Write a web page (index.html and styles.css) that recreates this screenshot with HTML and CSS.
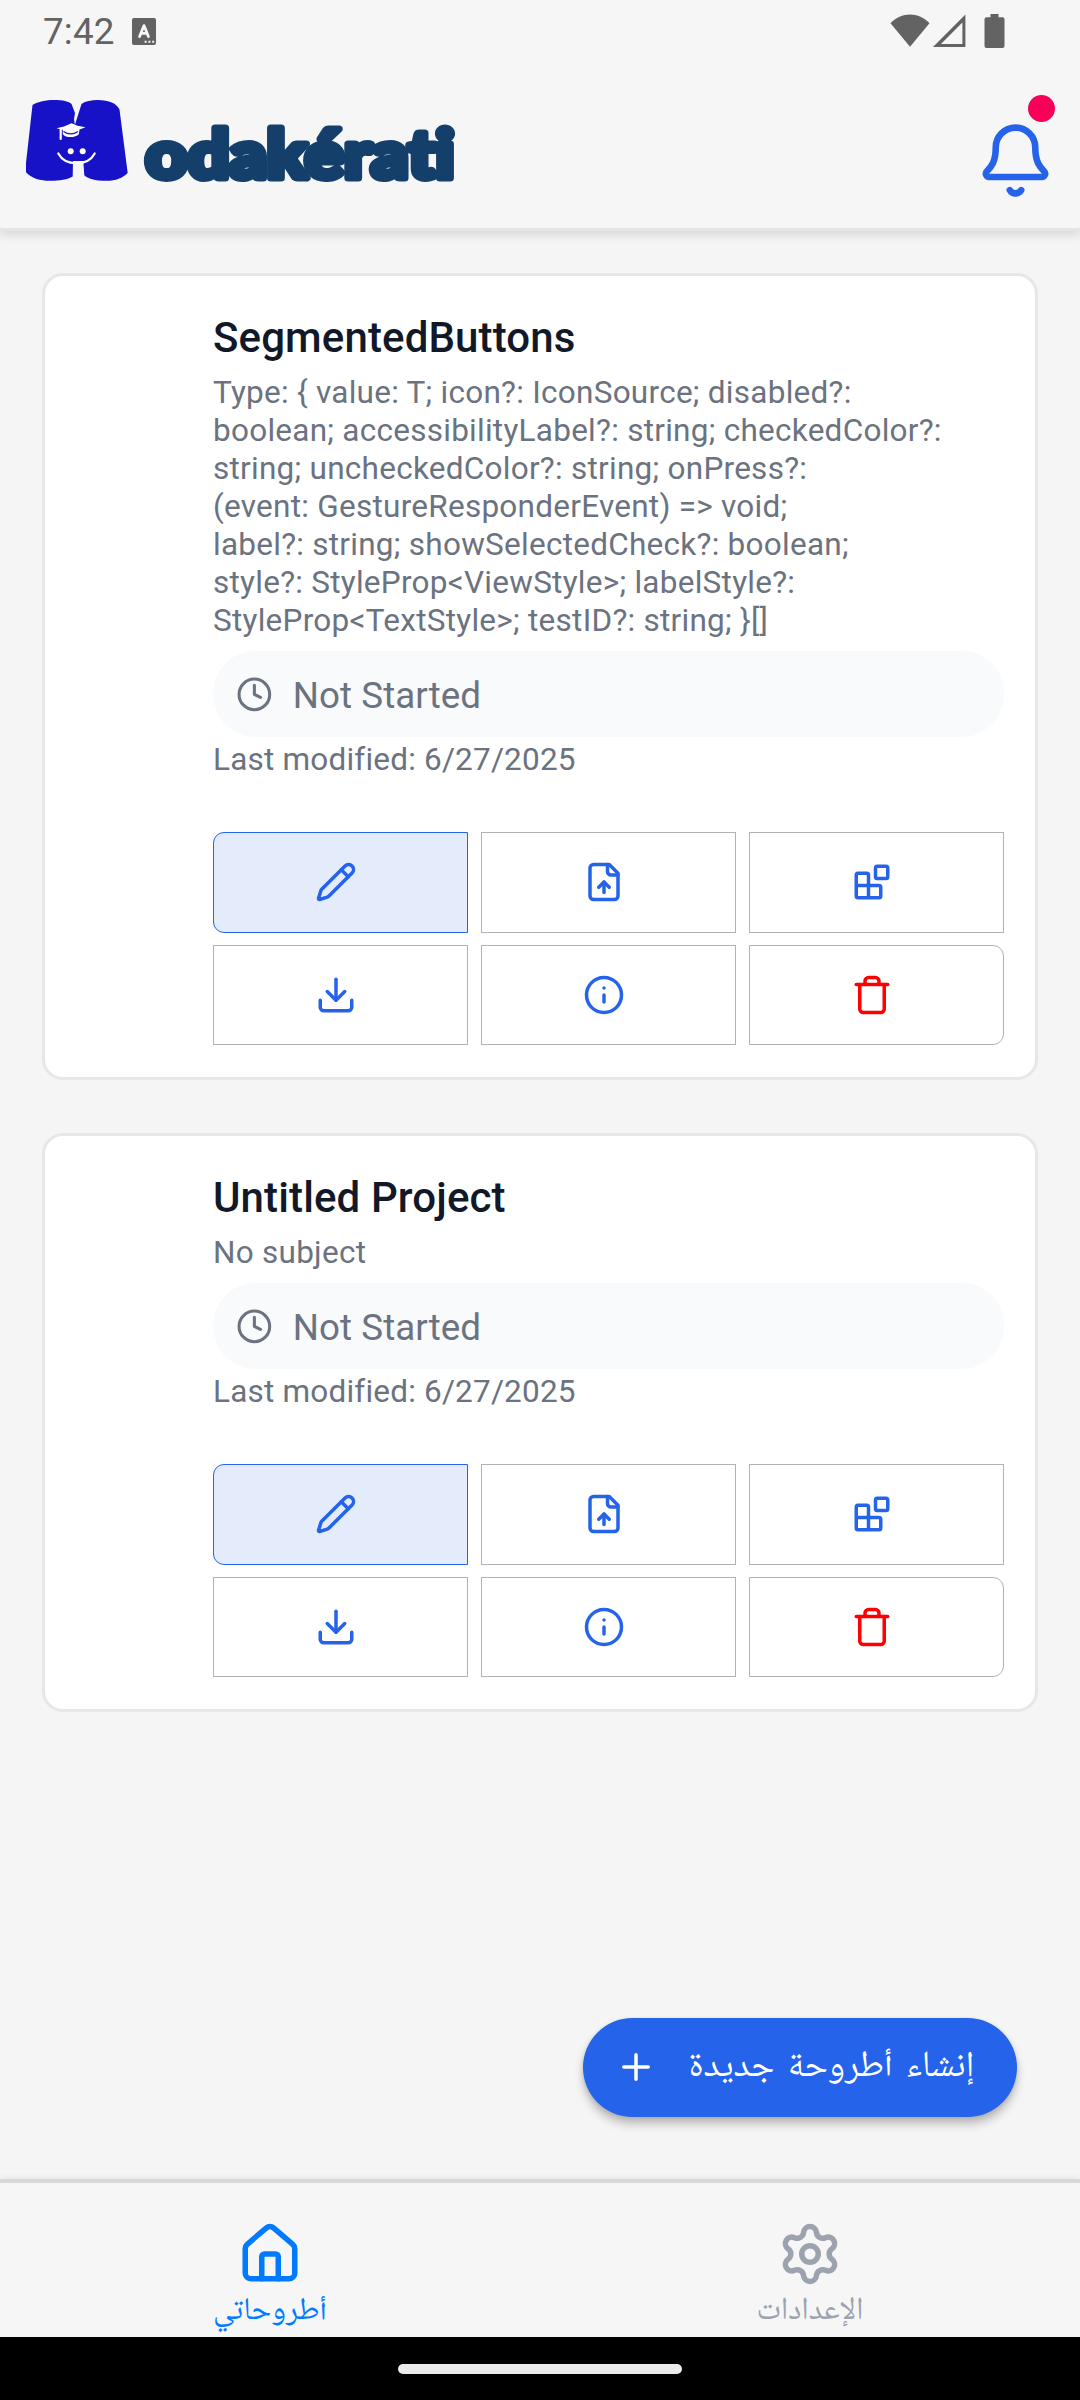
FILE: index.html
```html
<!DOCTYPE html>
<html lang="en">
<head>
<meta charset="utf-8">
<title>Modakérati</title>
<link rel="stylesheet" href="styles.css">
</head>
<body>
<svg class="defs" aria-hidden="true">
  <symbol id="clock" viewBox="0 0 24 24"><circle cx="12" cy="12" r="10"/><path d="M12 6v6l4 2"/></symbol>
  <symbol id="pencil" viewBox="0 0 24 24"><path d="M21.174 6.812a1 1 0 0 0-3.986-3.987L3.842 16.174a2 2 0 0 0-.5.83l-1.321 4.352a.5.5 0 0 0 .623.622l4.353-1.32a2 2 0 0 0 .83-.497z"/><path d="m15 5 4 4"/></symbol>
  <symbol id="file-up" viewBox="0 0 24 24"><path d="M15 2H6a2 2 0 0 0-2 2v16a2 2 0 0 0 2 2h12a2 2 0 0 0 2-2V7Z"/><path d="M14 2v4a2 2 0 0 0 2 2h4"/><path d="M12 12v6"/><path d="m15 15-3-3-3 3"/></symbol>
  <symbol id="blocks" viewBox="0 0 24 24"><rect width="7" height="7" x="14" y="3" rx="1"/><path d="M10 21V8a1 1 0 0 0-1-1H4a1 1 0 0 0-1 1v12a1 1 0 0 0 1 1h12a1 1 0 0 0 1-1v-5a1 1 0 0 0-1-1H3"/></symbol>
  <symbol id="download" viewBox="0 0 24 24"><path d="M21 15v4a2 2 0 0 1-2 2H5a2 2 0 0 1-2-2v-4"/><path d="m7 10 5 5 5-5"/><path d="M12 15V3"/></symbol>
  <symbol id="info" viewBox="0 0 24 24"><circle cx="12" cy="12" r="10"/><path d="M12 16v-4"/><path d="M12 8h.01"/></symbol>
  <symbol id="trash" viewBox="0 0 24 24"><path d="M3 6h18"/><path d="M19 6v14c0 1-1 2-2 2H7c-1 0-2-1-2-2V6"/><path d="M8 6V4c0-1 1-2 2-2h4c1 0 2 1 2 2v2"/></symbol>
</svg>

<div class="statusbar">
  <span class="time">7:42</span>
  <svg class="keyboard-icon" viewBox="0 0 24 27"><rect width="24" height="27" rx="2" fill="#636363"/><path d="M7.6 18.6 12 7.6l4.4 11M9.4 15.4h5.2" fill="none" stroke="#f6f6f6" stroke-width="2.8" stroke-linecap="round" stroke-linejoin="round"/><path d="M12.6 22.8h2v2h-2zM16.4 22.8h2v2h-2zM20.2 22.8h2v2h-2z" fill="#f6f6f6"/></svg>
  <svg class="system-icons" viewBox="0 0 115 35"><g fill="#636363"><path d="M.5 9.2C11-2.4 29-2.4 39.5 9.2L20 32.8z"/><path fill-rule="evenodd" d="M75.4 .6V33H43zM72.4 8.6 51 30h21.400z"/><path d="M100.500 0h8v3.200h4a2 2 0 0 1 2 2V32a2 2 0 0 1-2 2h-16a2 2 0 0 1-2-2V5.200a2 2 0 0 1 2-2h4z"/></g></svg>
</div>

<header class="header">
  <svg class="logo" viewBox="26 97 440 90">
    <path class="mark" d="M32.500 105C38 101.500 46 100 54 100c9 0 15 1.500 17.500 4L75 113l-1 6 .7 5h.5L81.500 104c4-3 10-4 16-4 12 0 19 3.500 22 9.500L127.700 173c-5 5-12 7.800-21 7.800-12 0-19-2-22.400-5.500L83.300 161H73l-.3 15.500c-5 3-13 4.300-22.700 4.300-10 0-18-2-24-8.500V163z"/>
    <g class="mark-face">
      <path d="M56.500 128.300 64 126.500l7.500-3.200 6 2.500 8 1.500-6 2.300-.7 4.700c-3 3.500-13 4-16 0v-4.500z"/>
      <circle cx="70.700" cy="151.300" r="3"/><circle cx="82.700" cy="151.300" r="3"/>
      <path class="line" d="M60.700 129v10M58.300 153.500c7 13 29.500 13 36.400 0"/>
    </g>
    <path class="cap-band" d="M63.500 131.500c4.500 3 10 3 14.500 0"/>
    <text class="wordmark" x="145.500" y="178" textLength="309" lengthAdjust="spacingAndGlyphs">odakérati</text>
  </svg>
  <div class="bell">
    <svg viewBox="0 0 24 24"><path d="M10.268 21a2 2 0 0 0 3.464 0"/><path d="M3.262 15.326A1 1 0 0 0 4 17h16a1 1 0 0 0 .74-1.673C19.41 13.956 18 12.499 18 8A6 6 0 0 0 6 8c0 4.499-1.411 5.956-2.738 7.326"/></svg>
    <span class="badge"></span>
  </div>
</header>

<main class="main">
  <article class="card">
    <h2 class="title">SegmentedButtons</h2>
    <p class="desc">Type: { value: T; icon?: IconSource; disabled?:<br>boolean; accessibilityLabel?: string; checkedColor?:<br>string; uncheckedColor?: string; onPress?:<br>(event: GestureResponderEvent) =&gt; void;<br>label?: string; showSelectedCheck?: boolean;<br>style?: StyleProp&lt;ViewStyle&gt;; labelStyle?:<br>StyleProp&lt;TextStyle&gt;; testID?: string; }[]</p>
    <div class="chip"><svg><use href="#clock"/></svg><span>Not Started</span></div>
    <p class="modified">Last modified: 6/27/2025</p>
    <div class="actions">
      <button class="action selected"><svg><use href="#pencil"/></svg></button>
      <button class="action"><svg><use href="#file-up"/></svg></button>
      <button class="action"><svg><use href="#blocks"/></svg></button>
      <button class="action"><svg><use href="#download"/></svg></button>
      <button class="action"><svg><use href="#info"/></svg></button>
      <button class="action danger"><svg><use href="#trash"/></svg></button>
    </div>
  </article>

  <article class="card">
    <h2 class="title">Untitled Project</h2>
    <p class="desc">No subject</p>
    <div class="chip"><svg><use href="#clock"/></svg><span>Not Started</span></div>
    <p class="modified">Last modified: 6/27/2025</p>
    <div class="actions">
      <button class="action selected"><svg><use href="#pencil"/></svg></button>
      <button class="action"><svg><use href="#file-up"/></svg></button>
      <button class="action"><svg><use href="#blocks"/></svg></button>
      <button class="action"><svg><use href="#download"/></svg></button>
      <button class="action"><svg><use href="#info"/></svg></button>
      <button class="action danger"><svg><use href="#trash"/></svg></button>
    </div>
  </article>

  <button class="fab"><svg viewBox="0 0 24 24"><path d="M5 12h14M12 5v14"/></svg><span dir="rtl" lang="ar">إنشاء أطروحة جديدة</span></button>
</main>

<nav class="tabs">
  <a class="tab active"><svg viewBox="0 0 24 24"><path d="M15 21v-8a1 1 0 0 0-1-1h-4a1 1 0 0 0-1 1v8"/><path d="M3 10a2 2 0 0 1 .709-1.528l7-5.999a2 2 0 0 1 2.582 0l7 5.999A2 2 0 0 1 21 10v9a2 2 0 0 1-2 2H5a2 2 0 0 1-2-2z"/></svg><span dir="rtl" lang="ar">أطروحاتي</span></a>
  <a class="tab"><svg viewBox="0 0 24 24"><path d="M9.671 4.136a2.34 2.34 0 0 1 4.659 0 2.34 2.34 0 0 0 3.319 1.915 2.34 2.34 0 0 1 2.33 4.033 2.34 2.34 0 0 0 0 3.831 2.34 2.34 0 0 1-2.33 4.033 2.34 2.34 0 0 0-3.319 1.915 2.34 2.34 0 0 1-4.659 0 2.34 2.34 0 0 0-3.32-1.915 2.34 2.34 0 0 1-2.33-4.033 2.34 2.34 0 0 0 0-3.831A2.34 2.34 0 0 1 6.35 6.051a2.34 2.34 0 0 0 3.319-1.915"/><circle cx="12" cy="12" r="3"/></svg><span dir="rtl" lang="ar">الإعدادات</span></a>
</nav>
<div class="gesture"><span></span></div>
</body>
</html>
```
FILE: styles.css
```css
* { box-sizing: border-box; margin: 0; padding: 0; }

body {
  width: 1080px;
  height: 2400px;
  display: flex;
  flex-direction: column;
  overflow: hidden;
  background: #f5f5f5;
  font-family: Roboto, sans-serif;
}

svg { display: block; flex: none; }
.defs { display: none; }

.statusbar {
  height: 63px;
  display: flex;
  align-items: center;
  padding: 0 75px 0 43px;
  background: #f6f6f6;
  z-index: 2;
}
.time { font-size: 36.75px; letter-spacing: .2px; color: #636363; width: 89px; }
.keyboard-icon { width: 24px; height: 27px; }
.system-icons { width: 115px; height: 35px; margin-left: auto; }

.header {
  height: 168px;
  display: flex;
  justify-content: space-between;
  padding: 34px 25px 0 26px;
  background: #f6f6f6;
  border-bottom: 3px solid #e3e3e8;
  box-shadow: 0 4px 10px rgba(0, 0, 0, .12);
  z-index: 1;
}
.logo { width: 440px; height: 90px; overflow: visible; }
.mark { fill: #1712c8; }
.mark-face { fill: #fff; }
.mark-face .line { fill: none; stroke: #fff; stroke-width: 2.2; stroke-linecap: round; }
.cap-band { fill: none; stroke: #1712c8; stroke-width: 1.2; }
.wordmark {
  font: 900 66px Lato, sans-serif;
  font-variant-ligatures: none;
  fill: #153f6b; stroke: #153f6b; stroke-width: 7; stroke-linejoin: round;
}
.bell { position: relative; width: 79px; height: 79px; margin-top: 24px; }
.bell svg {
  width: 79px; height: 79px;
  fill: none; stroke: #2563eb; stroke-width: 2;
  stroke-linecap: round; stroke-linejoin: round;
}
.badge {
  position: absolute; top: -26px; right: 0;
  width: 27px; height: 27px; border-radius: 50%;
  background: #f8005a;
}

.main {
  flex: 1;
  display: flex;
  flex-direction: column;
  gap: 53px;
  padding: 42px 42px 0;
}
.card {
  background: #fff;
  border: 3px solid #e5e7eb;
  border-radius: 21px;
  padding: 30px 31px 32px 168px;
}
.title { height: 68px; font-size: 42px; line-height: 63px; font-weight: 500; letter-spacing: .12px; color: #111827; }
.desc, .modified { font-size: 31.5px; line-height: 38px; letter-spacing: .26px; color: #6b7280; white-space: nowrap; }
.modified { letter-spacing: .2px; }
.chip {
  height: 86px; margin: 11px 0 4px;
  display: flex; align-items: center; gap: 20px;
  padding-left: 23px;
  border-radius: 42px;
  background: #f9fafc;
  color: #6b7280;
  font-size: 36.75px;
  letter-spacing: .05px;
}
.chip span { padding-top: 2px; }
.chip svg { width: 36.75px; height: 36.75px; }
.chip svg, .action svg {
  fill: none; stroke: currentColor; stroke-width: 2;
  stroke-linecap: round; stroke-linejoin: round;
}
.actions {
  display: grid;
  grid-template: 101px 100px / repeat(3, 1fr);
  gap: 12px 13px;
  margin-top: 53px;
}
.action {
  display: flex; align-items: center; justify-content: center;
  padding-right: 9px;
  background: #fff;
  border: 1px solid #b2b2b2;
  color: #2563eb;
}
.action:nth-child(-n+3) { padding-bottom: 1px; }
.action svg { width: 42px; height: 42px; }
.selected { background: #e4ebfb; border-color: #2563eb; border-radius: 11px 0 0 11px; }
.danger { color: #f00; border-radius: 0 11px 11px 0; }

.fab {
  align-self: flex-end;
  display: flex; align-items: center; justify-content: space-between;
  width: 434px; height: 99px;
  margin: auto 21px 62px 0;
  padding: 0 42px 1px 32px;
  border: 0; border-radius: 50px;
  background: #2563eb; color: #fff;
  box-shadow: 0 7px 10px rgba(0, 0, 0, .24), 0 1px 4px rgba(0, 0, 0, .1);
  font: 36.75px "Noto Naskh Arabic UI", "Noto Naskh Arabic", serif;
  word-spacing: 4.800px;
}
.fab svg { width: 42px; height: 42px; stroke: #fff; stroke-width: 2; stroke-linecap: round; }
.fab span { line-height: 60px; padding-bottom: 1px; white-space: nowrap; }

.tabs {
  height: 158px;
  display: flex;
  background: #f6f6f6;
  border-top: 4px solid #d9d9d9;
  box-shadow: 0 -1px 6px rgba(0, 0, 0, .07);
}
.tab {
  flex: 1;
  display: flex; flex-direction: column; align-items: center;
  padding-top: 38px;
  color: #9ca3af;
  font: 31.5px "Noto Naskh Arabic UI", "Noto Naskh Arabic", serif;
}
.tab.active { color: #007bff; }
.tab svg {
  width: 66px; height: 66px;
  fill: none; stroke: currentColor; stroke-width: 2;
  stroke-linecap: round; stroke-linejoin: round;
}
.tab span { line-height: 48px; white-space: nowrap; }

.gesture {
  height: 63px;
  display: flex; justify-content: center;
  padding-top: 27px;
  background: #000;
}
.gesture span { width: 284px; height: 10px; border-radius: 5px; background: #ebebeb; }
```
